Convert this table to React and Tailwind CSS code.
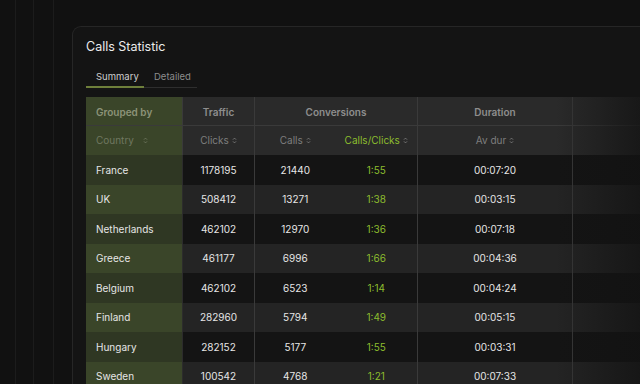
const rows = [
  ['France', '1178195', '21440', '1:55', '00:07:20'],
  ['UK', '508412', '13271', '1:38', '00:03:15'],
  ['Netherlands', '462102', '12970', '1:36', '00:07:18'],
  ['Greece', '461177', '6996', '1:66', '00:04:36'],
  ['Belgium', '462102', '6523', '1:14', '00:04:24'],
  ['Finland', '282960', '5794', '1:49', '00:05:15'],
  ['Hungary', '282152', '5177', '1:55', '00:03:31'],
  ['Sweden', '100542', '4768', '1:21', '00:07:33'],
];

function SortIcon({ className = '' }) {
  return (
    <svg width="5" height="7" viewBox="0 0 5 7" className={className} fill="none" stroke="currentColor" strokeWidth="0.9">
      <path d="M1 2.6 L2.5 1.1 L4 2.6" />
      <path d="M1 4.4 L2.5 5.9 L4 4.4" />
    </svg>
  );
}

export default function App() {
  return (
    <div
      className="relative w-[640px] h-[384px] overflow-hidden bg-[#111111] text-[#e4e4e4]"
      style={{ fontFamily: 'Inter, "Noto Sans", sans-serif' }}
    >
      {/* background guide lines */}
      <div className="absolute inset-y-0 left-[15px] w-px bg-[#1c1c1c]" />
      <div className="absolute inset-y-0 left-[33px] w-px bg-[#1c1c1c]" />
      <div className="absolute inset-y-0 left-[53px] w-px bg-[#1c1c1c]" />

      <div className="ml-[72px] mt-[26px] w-[620px] h-[400px] rounded-tl-[9px] border-l border-t border-[#262626] bg-[#141414] pl-[13px] pt-[12px]">
        <h1 className="text-[12.5px] leading-[16px] text-[#ececec]">Calls Statistic</h1>

        {/* Tabs */}
        <div className="mt-[16px] flex text-[9.5px] leading-[12px]">
          <div className="w-[58px] border-b-2 border-[#6e7f3b] pb-[3px] pl-[10px] text-[#cfcfcf]">Summary</div>
          <div className="w-[53px] border-b border-[#2e2e2e] pb-[4px] pl-[10px] text-[#8c8c8c]">Detailed</div>
        </div>

        {/* Table */}
        <div className="relative mt-[9px] text-[10px]">
          {/* header row 1 */}
          <div className="flex h-[28px] font-semibold text-[#8e8e8e]">
            <div className="flex w-[96px] items-center bg-[#3a4529] pl-[10px] pt-[2px] text-[#8c9378]">Grouped by</div>
            <div className="flex w-[72px] items-center justify-center border-l border-[#3a3a3a] bg-[#2a2a2a] pt-[2px]">Traffic</div>
            <div className="flex w-[163px] items-center justify-center border-l border-[#3a3a3a] bg-[#2a2a2a] pt-[2px]">Conversions</div>
            <div className="flex w-[155px] items-center justify-center border-l border-[#3a3a3a] bg-[#2a2a2a] pt-[2px]">Duration</div>
            <div className="flex w-[120px] border-l border-[#3a3a3a] bg-[#2a2a2a]" />
          </div>
          {/* header row 2 */}
          <div className="flex h-[30px] border-t border-[#3a3a3a] text-[#7e7e7e]">
            <div className="flex w-[96px] items-center gap-[9px] bg-[#3a4529] pl-[10px] text-[#6f7760]">
              Country <SortIcon />
            </div>
            <div className="flex w-[72px] items-center justify-center gap-[3px] border-l border-[#3a3a3a] bg-[#2a2a2a]">
              Clicks <SortIcon />
            </div>
            <div className="flex w-[163px] items-center border-l border-[#3a3a3a] bg-[#2a2a2a]">
              <div className="flex w-[81px] items-center justify-center gap-[3px]">Calls <SortIcon /></div>
              <div className="flex w-[82px] items-center justify-center gap-[3px] text-[#8cbd2e]">
                Calls/Clicks <SortIcon className="text-[#7e7e7e]" />
              </div>
            </div>
            <div className="flex w-[155px] items-center justify-center gap-[3px] border-l border-[#3a3a3a] bg-[#2a2a2a]">
              Av dur <SortIcon />
            </div>
            <div className="w-[120px] border-l border-[#3a3a3a] bg-[#2a2a2a]" />
          </div>

          {/* data rows */}
          {rows.map((r, i) => {
            const dark = i % 2 === 0;
            const bg = dark ? 'bg-[#141414]' : 'bg-[#242424]';
            return (
              <div key={r[0]} className="flex h-[29.5px] text-[#e6e6e6]">
                <div className={`flex w-[96px] items-center pl-[10px] pt-[1px] ${dark ? 'bg-[#2f3723]' : 'bg-[#3a4529]'}`}>{r[0]}</div>
                <div className={`flex w-[72px] items-center justify-center border-l border-[#2c2c2c] pt-[1px] ${bg}`}>{r[1]}</div>
                <div className={`flex w-[163px] items-center border-l border-[#3a3a3a] pt-[1px] ${bg}`}>
                  <div className="w-[81px] text-center">{r[2]}</div>
                  <div className="w-[82px] text-center text-[#8cbd2e]">{r[3]}</div>
                </div>
                <div className={`flex w-[155px] items-center justify-center border-l border-[#3a3a3a] pt-[1px] ${bg}`}>{r[4]}</div>
                <div className={`w-[120px] border-l border-[#3a3a3a] ${bg}`} />
              </div>
            );
          })}

          {/* right fade */}
          <div className="pointer-events-none absolute inset-y-0 left-[470px] w-[90px] bg-gradient-to-r from-transparent to-[#121212]/80" />
        </div>
      </div>
    </div>
  );
}
